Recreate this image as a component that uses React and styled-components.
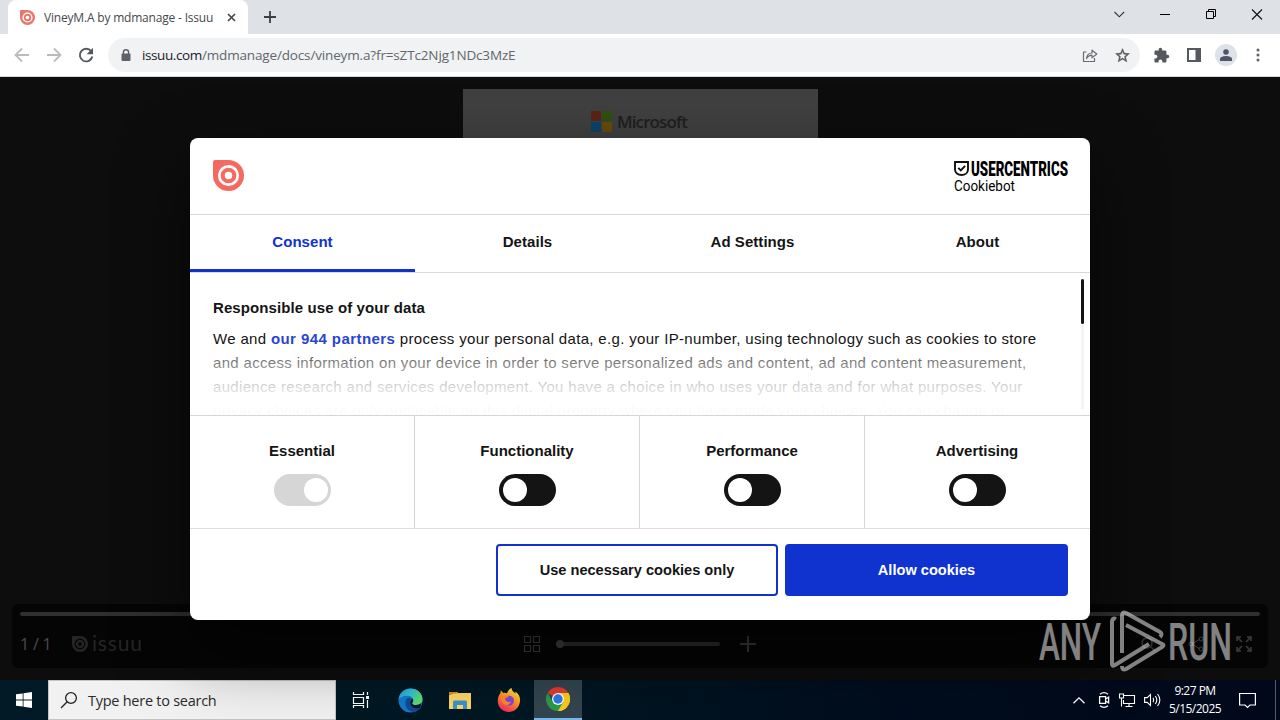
import React, { useState } from "react";
import styled, { createGlobalStyle } from "styled-components";

const GlobalStyle = createGlobalStyle`
  * {
    box-sizing: border-box;
  }

  body {
    margin: 0;
    overflow: hidden;
    background: #0d0d0d;
    font-family: "Liberation Sans", sans-serif;
  }

  button {
    font: inherit;
    letter-spacing: inherit;
    border: 0;
    padding: 0;
    background: none;
  }
`;

const IssuuMark = ({ size, color, hole }) => (
  <Icon width={size} height={size} viewBox="0 0 30 30">
    <path d="M0 2Q0 0 2 0H15A15 15 0 1 1 0 15Z" fill={color} />
    <circle cx="15" cy="15" r="8.9" fill="none" stroke={hole} strokeWidth="2.6" />
    <circle cx="15" cy="15" r="3.6" fill={hole} />
  </Icon>
);

const BrowserChrome = () => (
  <header>
    <TabStrip>
      <BrowserTab>
        <IssuuMark size={15} color="#e8786d" hole="#fff" />
        <TabTitle>VineyM.A by mdmanage - Issuu</TabTitle>
        <Icon width="9" height="9" viewBox="0 0 9 9">
          <path d="M1 1l7 7M8 1L1 8" stroke="#45484c" strokeWidth="1.7" />
        </Icon>
      </BrowserTab>
      <NewTab>
        <Icon width="12" height="12" viewBox="0 0 12 12">
          <path d="M6 0v12M0 6h12" stroke="#3c4043" strokeWidth="1.8" />
        </Icon>
      </NewTab>
      <WindowButtons>
        <Icon width="46" height="28" viewBox="0 0 46 28">
          <path d="M18.500 12l4.800 4.800 4.800-4.800" fill="none" stroke="#333" strokeWidth="1.1" />
        </Icon>
        <Icon width="46" height="28" viewBox="0 0 46 28">
          <path d="M18 14.500h10" stroke="#000" />
        </Icon>
        <Icon width="46" height="28" viewBox="0 0 46 28">
          <path d="M18.500 11.500h7v7h-7zM20.500 11.500v-2h7v7h-2" fill="none" stroke="#000" />
        </Icon>
        <Icon width="46" height="28" viewBox="0 0 46 28">
          <path d="M18 9.500l10 10M28 9.500l-10 10" stroke="#111" strokeWidth="1.1" />
        </Icon>
      </WindowButtons>
    </TabStrip>
    <Toolbar>
      <NavButtons>
        <Icon width="16" height="16" viewBox="0 0 16 16">
          <path d="M15 8H2M8 1.500L1.500 8 8 14.500" fill="none" stroke="#babcbe" strokeWidth="1.800" />
        </Icon>
        <Icon width="16" height="16" viewBox="0 0 16 16">
          <path d="M1 8h13M8 1.500L14.500 8 8 14.500" fill="none" stroke="#babcbe" strokeWidth="1.800" />
        </Icon>
        <Icon width="16" height="16" viewBox="0 0 16 16">
          <path d="M13.200 4.300A6.300 6.300 0 1 0 14.300 9.500" fill="none" stroke="#54575b" strokeWidth="1.900" />
          <path d="M15 .8v6.400H8.600z" fill="#54575b" />
        </Icon>
      </NavButtons>
      <AddressBar>
        <Icon width="10" height="13" viewBox="0 0 10 13">
          <path d="M2.400 5.500V3.400a2.600 2.600 0 0 1 5.200 0v2.100" fill="none" stroke="#5f6368" strokeWidth="1.400" />
          <rect x=".5" y="4.500" width="9" height="7.500" rx="1" fill="#5f6368" />
        </Icon>
        <Address>
          <b>issuu.com</b>/mdmanage/docs/vineym.a?fr=sZTc2Njg1NDc3MzE
        </Address>
        <Icon width="16" height="15" viewBox="0 0 16 15">
          <path d="M4.500 4H1.500v9.500h11V10" fill="none" stroke="#6b6f73" strokeWidth="1.200" />
          <path d="M4.500 10.500C5 6.800 7 5 10 5V2.200L14.800 6 10 9.800V7.200C7.500 7.200 5.900 8.300 4.500 10.500Z" fill="none" stroke="#6b6f73" strokeWidth="1.200" strokeLinejoin="round" />
        </Icon>
        <Icon width="17" height="17" viewBox="0 0 24 24">
          <path d="M22 9.240l-7.190-.62L12 2 9.190 8.630 2 9.240l5.460 4.730L5.820 21 12 17.270 18.180 21l-1.630-7.030zM12 15.400l-3.760 2.270 1-4.280-3.320-2.880 4.380-.38L12 6.100l1.710 4.040 4.380.38-3.320 2.880 1 4.280z" fill="#55595d" stroke="#55595d" strokeWidth=".5" />
        </Icon>
      </AddressBar>
      <ToolbarIcons>
        <Icon width="17" height="17" viewBox="0 0 24 24">
          <path d="M20.500 11H19V7c0-1.100-.9-2-2-2h-4V3.500a2.500 2.500 0 0 0-5 0V5H4c-1.100 0-1.990.9-1.990 2v3.800H3.500c1.490 0 2.700 1.210 2.700 2.700s-1.210 2.700-2.700 2.700H2V20c0 1.100.9 2 2 2h3.800v-1.500c0-1.490 1.210-2.700 2.700-2.700s2.700 1.210 2.700 2.700V22H17c1.100 0 2-.9 2-2v-4h1.500a2.500 2.500 0 0 0 0-5z" fill="#55595d" />
        </Icon>
        <Icon width="14" height="14" viewBox="0 0 14 14">
          <path d="M0 0h14v14H0zM2 2v10h6.500V2z" fill="#55595d" fillRule="evenodd" />
        </Icon>
        <Avatar>
          <Icon width="12" height="12" viewBox="0 0 12 12">
            <circle cx="6" cy="3" r="2.800" fill="#4f5566" />
            <path d="M0 12V9.800C0 7.800 4 7 6 7s6 .8 6 2.800V12z" fill="#4f5566" />
          </Icon>
        </Avatar>
        <Icon width="4" height="14" viewBox="0 0 4 14">
          <g fill="#5f6368">
            <circle cx="2" cy="2" r="1.500" />
            <circle cx="2" cy="7" r="1.500" />
            <circle cx="2" cy="12" r="1.500" />
          </g>
        </Icon>
      </ToolbarIcons>
    </Toolbar>
  </header>
);

const Viewer = () => (
  <ViewerArea>
    <Sheet>
      <Icon width="21" height="21" viewBox="0 0 21 21">
        <path d="M0 0h10v10H0z" fill="#5a2415" />
        <path d="M11 0h10v10H11z" fill="#2f5010" />
        <path d="M0 11h10v10H0z" fill="#0c4468" />
        <path d="M11 11h10v10H11z" fill="#6a4a0c" />
      </Icon>
      <SheetBrand>Microsoft</SheetBrand>
    </Sheet>
    <ReaderPanel>
      <Progress />
      <ReaderRow>
        <PageCount>1 / 1</PageCount>
        <ReaderBrand>
          <IssuuMark size={16} color="#252525" hole="#060606" />
          <span>issuu</span>
        </ReaderBrand>
        <Zoom>
          <Icon width="16" height="16" viewBox="0 0 16 16">
            <path d="M.5.5h6v6h-6zM9.500.5h6v6h-6zM.5 9.500h6v6h-6zM9.500 9.500h6v6h-6z" fill="none" stroke="#3d3d3d" strokeWidth="1.200" />
          </Icon>
          <Slider />
          <Icon width="16" height="16" viewBox="0 0 16 16">
            <path d="M8 0v16M0 8h16" stroke="#3a3a3a" strokeWidth="2" />
          </Icon>
        </Zoom>
        <ReaderActions>
          <Icon width="16" height="16" viewBox="0 0 16 16">
            <circle cx="7" cy="7" r="5" fill="none" stroke="#333" strokeWidth="1.500" />
            <path d="M11 11l4 4" stroke="#333" strokeWidth="1.500" />
          </Icon>
          <Icon width="16" height="16" viewBox="0 0 16 16">
            <path d="M4 8l8-5M4 8l8 5" stroke="#3a3a3a" />
            <g fill="none" stroke="#3a3a3a">
              <circle cx="3" cy="8" r="2" />
              <circle cx="13" cy="3" r="2" />
              <circle cx="13" cy="13" r="2" />
            </g>
          </Icon>
          <Icon width="16" height="16" viewBox="0 0 16 16">
            <path d="M1 5V1h4M11 1h4v4M15 11v4h-4M5 15H1v-4M1 1l5 5M15 1l-5 5M15 15l-5-5M1 15l5-5" fill="none" stroke="#3a3a3a" strokeWidth="1.600" />
          </Icon>
        </ReaderActions>
      </ReaderRow>
    </ReaderPanel>
  </ViewerArea>
);

const TABS = ["Consent", "Details", "Ad Settings", "About"];

const CookieDialog = () => {
  const [tab, setTab] = useState("Consent");
  const [allowed, setAllowed] = useState({ Essential: true });

  const toggle = (name) => {
    if (name === "Essential") return;
    setAllowed({ ...allowed, [name]: !allowed[name] });
  };

  return (
    <Dialog>
      <DialogHeader>
        <IssuuMark size={31} color="#f56a60" hole="#fff" />
        <Icon width="115" height="32" viewBox="0 0 115 32">
          <path d="M1 3h13v7.500c0 3.600-3 5.500-6.500 5.500S1 14.100 1 10.500z" fill="none" stroke="#111" strokeWidth="1.900" />
          <path d="M4.300 8.800l2.500 2.500 4.300-4.500" fill="none" stroke="#111" strokeWidth="1.900" />
          <BrandText x="17" y="17" fontSize="21" fontWeight="900" textLength="97" lengthAdjust="spacingAndGlyphs">
            USERCENTRICS
          </BrandText>
          <BrandText x="0" y="31.500" fontSize="15.500" textLength="61" lengthAdjust="spacingAndGlyphs">
            Cookiebot
          </BrandText>
        </Icon>
      </DialogHeader>
      <Tabs>
        {TABS.map((name) => (
          <Tab key={name} $active={name === tab} onClick={() => setTab(name)}>
            {name}
          </Tab>
        ))}
      </Tabs>
      <Body>
        <Heading>Responsible use of your data</Heading>
        <Copy>
          We and <Partners>our 944 partners</Partners> process your personal
          data, e.g. your IP-number, using technology such as cookies to store
          <br />
          and access information on your device in order to serve personalized
          ads and content, ad and content measurement,
          <br />
          audience research and services development. You have a choice in who
          uses your data and for what purposes. Your
          <br />
          privacy choices are only applicable on this digital property where you
          have made your choices. You can change or
        </Copy>
        <Fade />
        <ScrollTrack />
      </Body>
      <Choices>
        {["Essential", "Functionality", "Performance", "Advertising"].map(
          (name) => (
            <Choice key={name}>
              {name}
              <Switch
                $on={allowed[name]}
                $locked={name === "Essential"}
                onClick={() => toggle(name)}
              />
            </Choice>
          )
        )}
      </Choices>
      <DialogFooter>
        <ActionButton>Use necessary cookies only</ActionButton>
        <ActionButton $primary>Allow cookies</ActionButton>
      </DialogFooter>
    </Dialog>
  );
};

const Watermark = () => (
  <WatermarkLayer>
    <Icon width="194" height="64" viewBox="0 0 194 64">
      <BrandText x="1" y="50.500" fontSize="52" fontWeight="500" textLength="62" lengthAdjust="spacingAndGlyphs" fill="#fff">
        ANY
      </BrandText>
      <BrandText x="130" y="50.500" fontSize="52" fontWeight="500" textLength="64" lengthAdjust="spacingAndGlyphs" fill="#fff">
        RUN
      </BrandText>
      <g fill="none" stroke="#fff" strokeWidth="4" strokeLinejoin="round">
        <path d="M78 10q-4-2-4 3v42q0 3 3 1l34-21" />
        <path d="M84 44V7q0-5 4-3l34 19q3 2 0 5" />
        <path d="M88 16l36 19q3 1 0 3L88 60q-4 2-4-3" />
      </g>
    </Icon>
  </WatermarkLayer>
);

const Taskbar = () => (
  <Bar>
    <StartButton>
      <Icon width="16" height="16" viewBox="0 0 16 16">
        <path d="M0 2.300l6.700-.9v6.200H0zM7.500 1.200L16 0v7.600H7.500zM0 8.400h6.700v6.200L0 13.700zM7.500 8.400H16V16l-8.500-1.200z" fill="#fff" />
      </Icon>
    </StartButton>
    <SearchBox>
      <Icon width="18" height="18" viewBox="0 0 18 18">
        <circle cx="11" cy="7" r="5.400" fill="none" stroke="#222" strokeWidth="1.300" />
        <path d="M7.200 10.800L1 17" stroke="#222" strokeWidth="1.300" />
      </Icon>
      Type here to search
    </SearchBox>
    <BarItem>
      <Icon width="18" height="16" viewBox="0 0 18 16">
        <path d="M1.500 0v2.500h10V0M1.500 5.500h10v6h-10zM1.500 16v-2.500h10V16M15.500 0v3M15.500 8v8" fill="none" stroke="#fff" strokeWidth="1.200" />
        <path d="M14 4h3v3h-3z" fill="#fff" />
      </Icon>
    </BarItem>
    <BarItem>
      <Icon width="25" height="25" viewBox="0 0 25 25">
        <defs>
          <linearGradient id="edgeTop" x1="0" y1="0" x2="1" y2=".5">
            <stop offset="0" stopColor="#1b9ce2" />
            <stop offset=".55" stopColor="#37c5d0" />
            <stop offset="1" stopColor="#62dc66" />
          </linearGradient>
        </defs>
        <circle cx="12.500" cy="12.500" r="12" fill="#1479cf" />
        <path d="M.6 11.500C1.500 4.500 6.500.5 12.500.5c7 0 12 5 12 10.500 0 4-3 6-6.500 6-2.800 0-4-.9-3.800-1.800.3-1 1-1.500 1-3 0-2.500-2.500-4.500-6-4.500-4 0-7.500 2-8.600 3.800z" fill="url(#edgeTop)" />
        <path d="M8.500 11c-3 5 0 12.500 7.500 13 3.500-.5 6.300-3 7.300-5-5 3-10.800.5-11.300-4.500-.2-2 .5-3.500 1.500-4-2-1-4-.5-5 .5z" fill="#114a93" />
        <path d="M14.200 15.200c-.2 1 1 1.800 3.800 1.800 2 0 4.200-.8 5.300-2l-1 4.500c-4 2-9 .5-10-3.500-.5-2.500.5-4.700 2.200-5.500 1.300 2 .3 3.300-.3 4.700z" fill="#04172c" />
      </Icon>
    </BarItem>
    <BarItem>
      <Icon width="22" height="19" viewBox="0 0 22 19">
        <path d="M0 1h8.500l1.500 2H0z" fill="#e3930e" />
        <path d="M0 3.500L10 2h12v16H0z" fill="#fcd667" />
        <path d="M4 18v-7q0-1.500 1.500-1.500h11Q18 9.500 18 11v7h-4v-4H8v4z" fill="#3f91cf" />
      </Icon>
    </BarItem>
    <BarItem>
      <Icon width="24" height="24" viewBox="0 0 24 24">
        <defs>
          <linearGradient id="fire" x1=".8" y1="0" x2=".3" y2="1">
            <stop offset="0" stopColor="#fff04a" />
            <stop offset=".45" stopColor="#ff9a23" />
            <stop offset="1" stopColor="#f5246a" />
          </linearGradient>
        </defs>
        <path d="M14.500 0c.2 2.500 2 4 4 5.500 0-.8 0-1.300-.2-2C22 6 23.500 9.500 23 13.500 22.200 20 17 24 11.800 24 5 24 .5 18.500.8 12.500.9 9 2 7 3.500 5L3.700 2.500C5 3.200 5.500 4 6 5c1.500-.5 2.800-.3 4 .2C11 2.500 12.500 1 14.500 0z" fill="url(#fire)" />
        <circle cx="12" cy="12.800" r="5" fill="#8446da" />
        <path d="M5 8c3-1.500 5-1 7 1-2 .2-2.500 1-4 1.500.5 3 3 4.500 6 3-1 4-7 5-9 0-1-2-.8-4 0-5.500z" fill="#ff8a26" />
      </Icon>
    </BarItem>
    <BarItem $active>
      <Icon width="24" height="24" viewBox="0 0 24 24">
        <path d="M12 12L1.600 6A12 12 0 0 1 22.400 6z" fill="#e33b2e" />
        <path d="M12 12L22.400 6A12 12 0 0 1 12 24z" fill="#fccb1c" />
        <path d="M12 6H22.400A12 12 0 0 1 12 24L17.200 15z" fill="#fccb1c" />
        <path d="M1.600 6A12 12 0 0 0 12 24L17.200 15 12 12 6.800 15z" fill="#2a9b48" />
        <circle cx="12" cy="12" r="6" fill="#fff" />
        <circle cx="12" cy="12" r="4.700" fill="#3079e8" />
      </Icon>
    </BarItem>
    <Tray>
      <Icon width="12" height="7" viewBox="0 0 12 7">
        <path d="M.5 6.300L6 .9l5.500 5.400" fill="none" stroke="#fff" strokeWidth="1.300" />
      </Icon>
      <Icon width="12" height="16" viewBox="0 0 12 16">
        <path d="M2 2.200Q6-.8 10 2.200M2 13.800q4 3 8 0" fill="none" stroke="#fff" strokeWidth="1.200" />
        <path d="M1.600 4.600h6v6.800h-6zM7.600 7l3-1.800v5.600L7.600 9" fill="none" stroke="#fff" strokeWidth="1.300" />
      </Icon>
      <Icon width="16" height="14" viewBox="0 0 16 14">
        <path d="M5 2.500h10.500v8H4.500V7M10 10.500v3M6.500 13.500h7M.5 1h4v4h-4zM2.500 5v8.500" fill="none" stroke="#fff" strokeWidth="1.100" />
      </Icon>
      <Icon width="17" height="14" viewBox="0 0 17 14">
        <path d="M.6 4.600h2.600L6.500 1.500v11L3.200 9.400H.6z" fill="none" stroke="#fff" strokeWidth="1.100" />
        <path d="M9 4.800q1.500 2.200 0 4.400M11.300 3q3 4 0 8M13.600 1q4.500 6 0 12" fill="none" stroke="#fff" strokeWidth="1.100" />
      </Icon>
      <Clock>
        <span>9:27 PM</span>
        <span>5/15/2025</span>
      </Clock>
      <Icon width="17" height="17" viewBox="0 0 17 17">
        <path d="M.6 1.500h15.800v11.500H11L8.500 15.500 6 13H.6z" fill="none" stroke="#fff" strokeWidth="1.200" />
      </Icon>
    </Tray>
  </Bar>
);

const App = () => (
  <Screen>
    <GlobalStyle />
    <BrowserChrome />
    <Viewer />
    <Taskbar />
    <CookieDialog />
    <Watermark />
  </Screen>
);

const Screen = styled.main`
  position: relative;
  display: flex;
  flex-direction: column;
  width: 1280px;
  height: 720px;
  overflow: hidden;
`;

const Icon = styled.svg`
  display: block;
  flex: none;
  overflow: visible;
`;

const BrandText = styled.text`
  font-family: Roboto, "Liberation Sans", sans-serif;
`;

const TabStrip = styled.div`
  display: flex;
  height: 34px;
  padding-left: 8px;
  background: #dee1e6;
`;

const BrowserTab = styled.div`
  display: flex;
  align-items: center;
  width: 240px;
  padding: 0 12px;
  border-radius: 8px 8px 0 0;
  background: #fff;
`;

const TabTitle = styled.span`
  flex: 1;
  margin-left: 9px;
  font-family: "Open Sans", sans-serif;
  font-size: 12px;
  letter-spacing: -0.19px;
  white-space: nowrap;
  color: #45484c;
`;

const NewTab = styled.div`
  display: flex;
  align-items: center;
  margin-left: 16px;
`;

const WindowButtons = styled.div`
  display: flex;
  margin-left: auto;
`;

const Toolbar = styled.div`
  display: flex;
  align-items: center;
  height: 43px;
  padding: 0 19px 0 14px;
  border-bottom: 1px solid #d5d7da;
  background: #fff;
`;

const NavButtons = styled.div`
  display: flex;
  gap: 16px;
`;

const AddressBar = styled.div`
  display: flex;
  align-items: center;
  gap: 16px;
  width: 1032px;
  height: 34px;
  margin-left: 14px;
  padding: 0 9px 0 13px;
  border-radius: 17px;
  background: #f0f2f4;
`;

const Address = styled.span`
  flex: 1;
  margin-left: -5px;
  font-family: "Open Sans", sans-serif;
  font-size: 13.5px;
  letter-spacing: -0.15px;
  color: #63676b;

  b {
    font-weight: 400;
    letter-spacing: -0.4px;
    color: #202124;
  }
`;

const ToolbarIcons = styled.div`
  display: flex;
  align-items: center;
  gap: 17px;
  padding-left: 13px;
`;

const Avatar = styled.div`
  display: flex;
  align-items: center;
  justify-content: center;
  width: 22px;
  height: 22px;
  margin: 0 2px 0 -3px;
  border-radius: 50%;
  background: #dee1ea;
`;

const ViewerArea = styled.section`
  display: flex;
  flex: 1;
  flex-direction: column;
  justify-content: space-between;
  padding: 12px;
  background: #0d0d0d;
`;

const Sheet = styled.div`
  display: flex;
  align-self: center;
  gap: 5px;
  width: 355px;
  height: 420px;
  padding: 22px 0 0 128.5px;
  background: #404040;
`;

const SheetBrand = styled.span`
  font-family: "Open Sans", sans-serif;
  font-size: 17px;
  font-weight: 600;
  line-height: 21px;
  letter-spacing: -0.9px;
  color: #1f1f1f;
`;

const ReaderPanel = styled.div`
  height: 64px;
  padding: 8px;
  border-radius: 6px;
  background: #050505;
`;

const Progress = styled.div`
  height: 4px;
  border-radius: 2px;
  background: #303030;
`;

const ReaderRow = styled.div`
  display: flex;
  align-items: center;
  height: 56px;
`;

const PageCount = styled.span`
  width: 52px;
  font-family: "Open Sans", sans-serif;
  font-size: 16px;
  letter-spacing: -0.2px;
  color: #4a4a4a;
`;

const ReaderBrand = styled.div`
  display: flex;
  align-items: center;
  gap: 4px;
  width: 452px;
  font-family: Lato, sans-serif;
  font-size: 21px;
  line-height: 20px;
  letter-spacing: 0.8px;
  color: #252525;

  span {
    margin-top: -3px;
  }
`;

const Zoom = styled.div`
  display: flex;
  align-items: center;
  gap: 20px;
`;

const Slider = styled.div`
  width: 160px;
  height: 4px;
  border-radius: 2px;
  background: #2d2d2d;

  &::before {
    content: "";
    display: block;
    width: 8px;
    height: 8px;
    margin-top: -2px;
    margin-left: -4px;
    border-radius: 50%;
    background: #3f3f3f;
  }
`;

const ReaderActions = styled.div`
  display: flex;
  gap: 32px;
  margin-left: auto;
  padding-right: 8px;
`;

const Dialog = styled.section`
  position: absolute;
  top: 138px;
  left: 190px;
  display: flex;
  flex-direction: column;
  width: 900px;
  height: 482px;
  border-radius: 8px;
  background: #fff;
  font-size: 15px;
  color: #141414;
  box-shadow: 0 30px 70px rgba(0, 0, 0, 0.6);
`;

const DialogHeader = styled.div`
  display: flex;
  align-items: center;
  justify-content: space-between;
  height: 77px;
  padding: 0 21px 2px 23px;
  border-bottom: 1px solid #d9d9d9;
`;

const Tabs = styled.div`
  display: grid;
  grid-template-columns: repeat(4, 1fr);
  height: 58px;
  border-bottom: 1px solid #d9d9d9;
`;

const Tab = styled.button`
  && {
    padding-bottom: ${(props) => (props.$active ? 2 : 5)}px;
    border-bottom: ${(props) => (props.$active ? "3px solid #1032cf" : "0")};
    font-weight: 700;
    letter-spacing: 0.05px;
    color: ${(props) => (props.$active ? "#1032cf" : "#141414")};
  }
`;

const Body = styled.div`
  position: relative;
  height: 142px;
  padding: 26px 23px 0;
  overflow: hidden;
`;

const Heading = styled.h2`
  margin: 0;
  font-size: 15px;
  line-height: 18px;
  letter-spacing: 0.1px;
`;

const Copy = styled.p`
  margin: 10px 0 0;
  line-height: 24px;
  letter-spacing: 0.33px;
  white-space: nowrap;
`;

const Partners = styled.a`
  font-weight: 700;
  letter-spacing: 0.43px;
  color: #2a45d4;
`;

const Fade = styled.div`
  position: absolute;
  right: 20px;
  bottom: 0;
  left: 0;
  height: 70px;
  background: linear-gradient(
    rgba(255, 255, 255, 0),
    rgba(255, 255, 255, 0.46) 26%,
    rgba(255, 255, 255, 0.82) 60%,
    rgba(255, 255, 255, 0.98) 86%
  );
`;

const ScrollTrack = styled.div`
  position: absolute;
  top: 6px;
  right: 6px;
  width: 3px;
  height: 130px;
  background: #f3f3f3;

  &::before {
    content: "";
    display: block;
    height: 45px;
    border-radius: 2px;
    background: #141414;
  }
`;

const Choices = styled.div`
  display: grid;
  grid-template-columns: repeat(4, 1fr);
  height: 114px;
  border-top: 1px solid #d6d6d6;
  border-bottom: 1px solid #dddfe2;
`;

const Choice = styled.div`
  display: flex;
  flex-direction: column;
  align-items: center;
  gap: 14px;
  padding-top: 26px;
  border-right: 1px solid #d6d6d6;
  font-weight: 700;
  line-height: 18px;

  &:last-child {
    border-right-color: transparent;
  }
`;

const Switch = styled.button`
  && {
    display: flex;
    align-items: center;
    justify-content: ${(props) => (props.$on ? "flex-end" : "flex-start")};
    width: 57px;
    height: 32px;
    padding: 0 ${(props) => (props.$on ? 3 : 4)}px;
    border-radius: 16px;
    background: ${(props) => (props.$locked ? "#d6d6d6" : "#141414")};
  }

  &::before {
    content: "";
    width: 24px;
    height: 24px;
    border-radius: 50%;
    background: #fff;
  }
`;

const DialogFooter = styled.div`
  display: flex;
  justify-content: flex-end;
  gap: 7px;
  padding: 15px 22px 0;
`;

const ActionButton = styled.button`
  && {
    width: ${(props) => (props.$primary ? 283 : 282)}px;
    height: 52px;
    border: 2px solid #1032cf;
    border-radius: 4px;
    font-size: 14.6px;
    font-weight: 700;
    background: ${(props) => (props.$primary ? "#1032cf" : "#fff")};
    color: ${(props) => (props.$primary ? "#fff" : "#141414")};
  }
`;

const WatermarkLayer = styled.div`
  position: absolute;
  top: 609px;
  left: 1038px;
  opacity: 0.5;
  pointer-events: none;
`;

const Bar = styled.footer`
  display: flex;
  height: 40px;
  padding-right: 4px;
  background: linear-gradient(90deg, #011a25, #011722 42%, #010e1e 65%, #01081a);
  font-family: "Open Sans", sans-serif;
`;

const StartButton = styled.div`
  display: flex;
  align-items: center;
  justify-content: center;
  width: 48px;
`;

const SearchBox = styled.div`
  display: flex;
  align-items: center;
  gap: 10px;
  width: 288px;
  padding-left: 11px;
  border: 1px solid #c4c4c4;
  background: #f1f1f1;
  font-size: 14.5px;
  letter-spacing: -0.26px;
  color: #2b2b2b;
`;

const BarItem = styled.div`
  display: flex;
  align-items: center;
  justify-content: center;
  width: ${(props) => (props.$active ? 48 : 49.5)}px;
  border-bottom: ${(props) => (props.$active ? "2px solid #76b9ed" : "0")};
  background: ${(props) => (props.$active ? "#33454f" : "transparent")};
`;

const Tray = styled.div`
  display: flex;
  align-items: center;
  margin-left: auto;
  padding-right: 19px;
  gap: 9px;
  border-right: 1px solid #555b6b;

  svg:first-child {
    margin-right: 4px;
  }
`;

const Clock = styled.div`
  display: flex;
  flex-direction: column;
  align-items: center;
  width: 54px;
  margin-right: 8px;
  margin-left: -2px;
  font-size: 12px;
  line-height: 18px;
  letter-spacing: -0.52px;
  white-space: nowrap;
  color: #fff;
`;

export default App;
